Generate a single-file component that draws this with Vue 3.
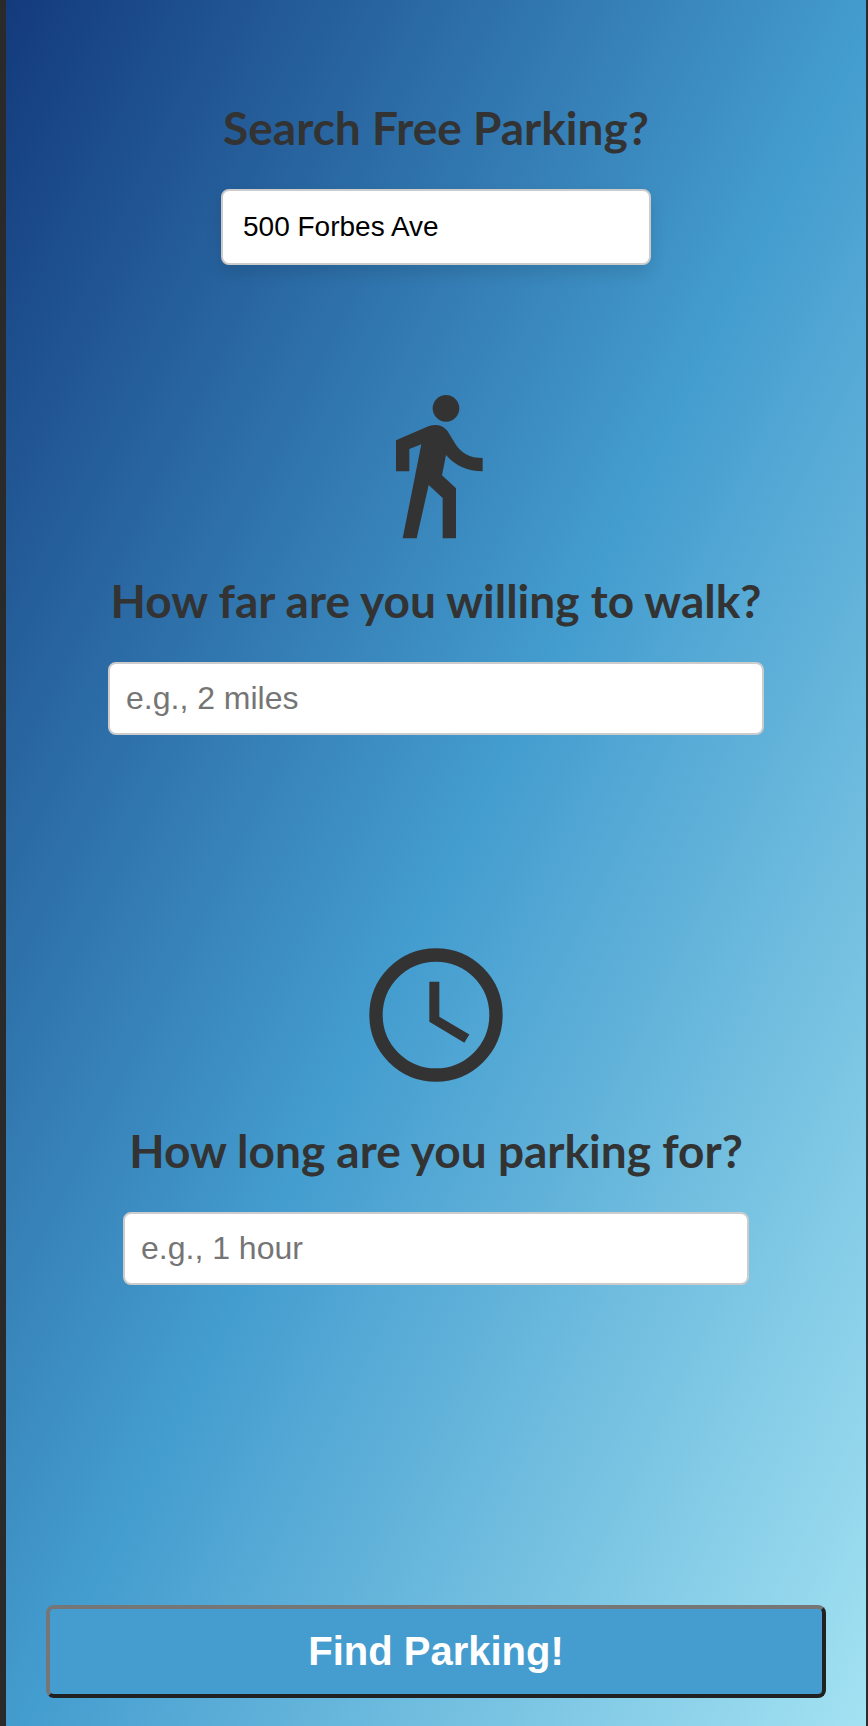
<script setup>
import { ref } from 'vue'

const address = ref('500 Forbes Ave')
const distance = ref('')
const duration = ref('')
</script>

<template>
  <main class="screen">
    <form class="form" @submit.prevent>
      <section class="group search">
        <label class="title" for="address">Search Free Parking?</label>
        <input id="address" v-model="address" class="field address" type="text" />
      </section>

      <section class="group walk">
        <svg class="icon" viewBox="-12 15 480 480" aria-hidden="true">
          <circle cx="258" cy="85" r="40" />
          <path d="M108 181L205 139Q216 135 229 135Q250 136 263 154L284 188Q310 234 368 234V274Q300 274 258 225L246 286L288 325V475H248V354L206 315L170 475H128L184 193L148 207V274H108Z" />
        </svg>
        <label class="title" for="distance">How far are you willing to walk?</label>
        <input id="distance" v-model="distance" class="field" type="text" placeholder="e.g., 2 miles" />
      </section>

      <section class="group duration">
        <svg class="icon" viewBox="0 0 24 24" aria-hidden="true">
          <circle class="ring" cx="12" cy="12" r="9" />
          <path d="M12.5 7H11v6l5.25 3.15.75-1.23-4.5-2.67z" />
        </svg>
        <label class="title" for="duration">How long are you parking for?</label>
        <input id="duration" v-model="duration" class="field" type="text" placeholder="e.g., 1 hour" />
      </section>

      <button class="submit" type="submit">Find Parking!</button>
    </form>
  </main>
</template>

<style>
body {
  background: #2a2a2a;
}
</style>

<style scoped>
.screen {
  box-sizing: border-box;
  min-height: 100vh;
  padding: 0 2px 0 6px;
  display: flex;
}

.form {
  box-sizing: border-box;
  flex: 1;
  padding: 100px 40px 28px;
  display: flex;
  flex-direction: column;
  align-items: center;
  background: linear-gradient(to bottom right, #133a7c, #449dcf 51%, #a3e2f2);
  font-family: "Liberation Sans", Arial, sans-serif;
}

.group {
  width: 100%;
  display: flex;
  flex-direction: column;
  align-items: center;
}

.search {
  max-width: 430px;
}

.walk {
  max-width: 656px;
  margin-top: 120px;
}

.duration {
  max-width: 626px;
  margin-top: 200px;
}

.icon {
  width: 160px;
  height: 160px;
  margin-bottom: 28px;
  fill: #333;
}

.ring {
  fill: none;
  stroke: #333;
  stroke-width: 2;
}

.title {
  margin-bottom: 33px;
  color: #333;
  font-family: Lato, sans-serif;
  font-size: 46px;
  font-weight: 700;
  line-height: 56px;
  white-space: nowrap;
}

.field {
  box-sizing: border-box;
  width: 100%;
  padding: 16px;
  border: 2px solid #ccc;
  border-radius: 8px;
  background: #fff;
  color: #000;
  font-family: inherit;
  font-size: 32px;
  outline: none;
}

.field::placeholder {
  color: #757575;
  opacity: 1;
}

.address {
  padding: 20px;
  font-size: 28px;
  box-shadow: 0 8px 16px rgba(0, 0, 0, 0.1);
}

.submit {
  width: 100%;
  margin-top: auto;
  padding: 20px;
  border: 4px solid;
  border-color: #767676 #212121 #212121 #767676;
  border-radius: 8px;
  background: #449ccf;
  color: #fff;
  font-family: inherit;
  font-size: 40px;
  font-weight: 700;
}
</style>
